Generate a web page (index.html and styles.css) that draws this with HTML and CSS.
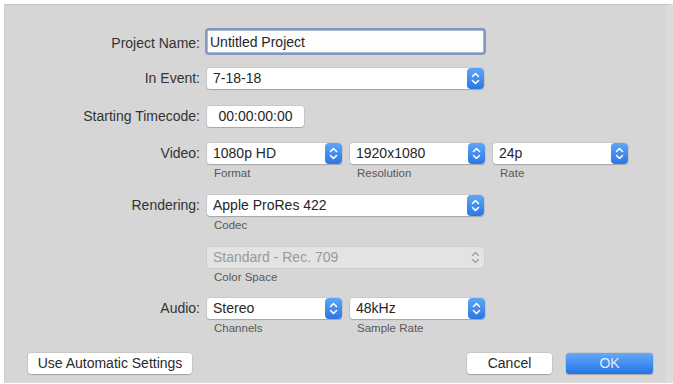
FILE: index.html
```html
<!DOCTYPE html>
<html>
<head>
<meta charset="utf-8">
<link rel="stylesheet" href="styles.css">
</head>
<body>
<div class="dialog">
  <div class="row r-name">
    <span class="lbl">Project Name:</span>
    <div class="ctrls"><div class="input">Untitled Project</div></div>
  </div>
  <div class="row r-event">
    <span class="lbl">In Event:</span>
    <div class="ctrls">
      <div class="select wide"><span class="val">7-18-18</span><span class="step"><svg viewBox="0 0 17 21" width="17" height="21"><polyline points="5.5,8.5 8.5,5.5 11.5,8.5"/><polyline points="5.5,12.5 8.5,15.5 11.5,12.5"/></svg></span></div>
    </div>
  </div>
  <div class="row r-tc">
    <span class="lbl">Starting Timecode:</span>
    <div class="ctrls"><div class="field tc">00:00:00:00</div></div>
  </div>
  <div class="row r-video">
    <span class="lbl">Video:</span>
    <div class="ctrls">
      <div class="col">
        <div class="select small"><span class="val">1080p HD</span><span class="step"><svg viewBox="0 0 17 21" width="17" height="21"><polyline points="5.5,8.5 8.5,5.5 11.5,8.5"/><polyline points="5.5,12.5 8.5,15.5 11.5,12.5"/></svg></span></div>
        <div class="sub">Format</div>
      </div>
      <div class="col">
        <div class="select small"><span class="val">1920x1080</span><span class="step"><svg viewBox="0 0 17 21" width="17" height="21"><polyline points="5.5,8.5 8.5,5.5 11.5,8.5"/><polyline points="5.5,12.5 8.5,15.5 11.5,12.5"/></svg></span></div>
        <div class="sub">Resolution</div>
      </div>
      <div class="col">
        <div class="select small"><span class="val">24p</span><span class="step"><svg viewBox="0 0 17 21" width="17" height="21"><polyline points="5.5,8.5 8.5,5.5 11.5,8.5"/><polyline points="5.5,12.5 8.5,15.5 11.5,12.5"/></svg></span></div>
        <div class="sub">Rate</div>
      </div>
    </div>
  </div>
  <div class="row r-render">
    <span class="lbl">Rendering:</span>
    <div class="ctrls">
      <div class="col">
        <div class="select wide"><span class="val">Apple ProRes 422</span><span class="step"><svg viewBox="0 0 17 21" width="17" height="21"><polyline points="5.5,8.5 8.5,5.5 11.5,8.5"/><polyline points="5.5,12.5 8.5,15.5 11.5,12.5"/></svg></span></div>
        <div class="sub">Codec</div>
      </div>
    </div>
  </div>
  <div class="row r-cs">
    <span class="lbl"></span>
    <div class="ctrls">
      <div class="col">
        <div class="select wide disabled"><span class="val">Standard - Rec. 709</span><span class="step off"><svg viewBox="0 0 17 21" width="17" height="21"><polyline points="5.5,8.5 8.5,5.5 11.5,8.5"/><polyline points="5.5,12.5 8.5,15.5 11.5,12.5"/></svg></span></div>
        <div class="sub">Color Space</div>
      </div>
    </div>
  </div>
  <div class="row r-audio">
    <span class="lbl">Audio:</span>
    <div class="ctrls">
      <div class="col">
        <div class="select small"><span class="val">Stereo</span><span class="step"><svg viewBox="0 0 17 21" width="17" height="21"><polyline points="5.5,8.5 8.5,5.5 11.5,8.5"/><polyline points="5.5,12.5 8.5,15.5 11.5,12.5"/></svg></span></div>
        <div class="sub">Channels</div>
      </div>
      <div class="col">
        <div class="select small"><span class="val">48kHz</span><span class="step"><svg viewBox="0 0 17 21" width="17" height="21"><polyline points="5.5,8.5 8.5,5.5 11.5,8.5"/><polyline points="5.5,12.5 8.5,15.5 11.5,12.5"/></svg></span></div>
        <div class="sub">Sample Rate</div>
      </div>
    </div>
  </div>
  <div class="buttons">
    <div class="btn auto">Use Automatic Settings</div>
    <div class="spacer"></div>
    <div class="btn cancel">Cancel</div>
    <div class="btn ok">OK</div>
  </div>
</div>
</body>
</html>
```

FILE: styles.css
```css
html, body {
  margin: 0;
  padding: 0;
  background: #ffffff;
}
body {
  font-family: "Liberation Sans", Arial, sans-serif;
  font-size: 14px;
  color: #2c2c2c;
}
.dialog {
  margin: 4px 0 0 4px;
  height: 379px;
  background: #d6d6d6;
  border-top: 1px solid #c2c2c2;
  border-left: 1px solid #cbcbcb;
  border-right: 7px solid #dcdcdc;
  padding-top: 25px;
  box-sizing: border-box;
  overflow: hidden;
}
.row {
  display: flex;
  align-items: flex-start;
}
.lbl {
  width: 195px;
  flex: none;
  text-align: right;
  line-height: 21px;
  color: #333333;
}
.r-name .lbl { line-height: 27px; }
.ctrls {
  margin-left: 7px;
  display: flex;
  gap: 8px;
}
.col {
  display: flex;
  flex-direction: column;
}
.r-event { margin-top: 11px; }
.r-tc { margin-top: 17px; }
.r-video { margin-top: 16px; }
.r-render { margin-top: 15px; }
.r-cs { margin-top: 15px; }
.r-audio { margin-top: 14px; }

.input {
  width: 277px;
  height: 23px;
  box-sizing: border-box;
  background: #fdfdfd;
  border: 1px solid #a9b8d3;
  box-shadow: 0 0 0 2px #8396bb;
  border-radius: 2px;
  padding-left: 2px;
  line-height: 23px;
  color: #262626;
}
.field, .select {
  height: 21px;
  box-sizing: border-box;
  background: #ffffff;
  border-radius: 3px;
  box-shadow: 0 0 0 0.5px rgba(0,0,0,0.12), 0 1px 1px rgba(0,0,0,0.18);
  line-height: 21px;
  color: #262626;
}
.tc {
  width: 97px;
  text-align: center;
}
.select {
  display: flex;
  align-items: stretch;
  padding-left: 6px;
}
.select .val {
  flex: 1;
  white-space: nowrap;
  overflow: hidden;
}
.wide { width: 277px; }
.small { width: 135px; }
.step {
  width: 17px;
  flex: none;
  border-radius: 4px;
  background: linear-gradient(#5ea6f8, #2a77e4);
  display: flex;
}
.step svg polyline {
  fill: none;
  stroke: #ffffff;
  stroke-width: 1.6;
  stroke-linecap: round;
  stroke-linejoin: round;
}
.select.disabled {
  background: #e3e3e3;
  box-shadow: 0 0 0 0.5px rgba(0,0,0,0.08);
  color: #9a9a9a;
}
.step.off {
  background: transparent;
}
.step.off svg polyline {
  stroke: #9a9a9a;
  stroke-width: 1.1;
}
.sub {
  margin-top: 2px;
  padding-left: 7px;
  font-size: 11.5px;
  line-height: 14px;
  color: #585858;
}
.buttons {
  display: flex;
  margin-top: 18px;
  padding-left: 23px;
  padding-right: 13px;
  gap: 14px;
}
.spacer { flex: 1; }
.btn {
  height: 21px;
  line-height: 21px;
  text-align: center;
  border-radius: 3px;
  background: #ffffff;
  box-shadow: 0 0 0 0.5px rgba(0,0,0,0.12), 0 1px 1px rgba(0,0,0,0.18);
  color: #2a2a2a;
}
.auto { width: 164px; }
.cancel { width: 85px; }
.ok {
  width: 87px;
  background: linear-gradient(#63a9f8, #2374e6);
  color: #e2edfc;
}
```
